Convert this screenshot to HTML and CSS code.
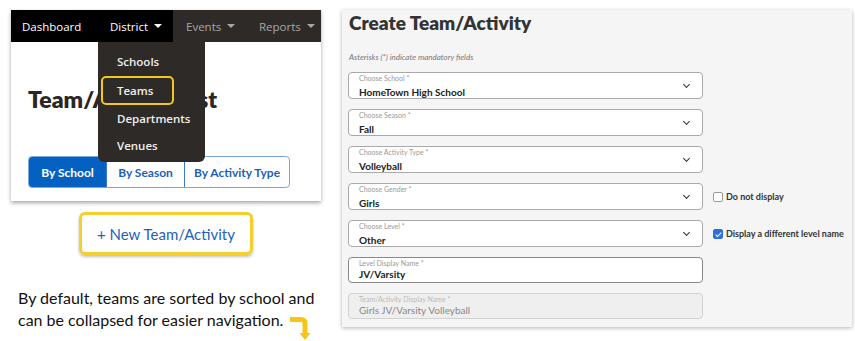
FILE: index.html
```html
<!DOCTYPE html>
<html lang="en">
<head>
  <meta charset="UTF-8">
  <meta name="viewport" content="width=device-width, initial-scale=1.0">
  <title>Teams</title>
  <link rel="stylesheet" href="styles.css">
</head>
<body>
<div class="page">
  <div class="left">
    <div class="card">
      <div class="nav">
        <div class="nav-item dash">Dashboard</div>
        <div class="nav-item district">District <span class="caret"></span></div>
        <div class="nav-item dim events">Events <span class="caret"></span></div>
        <div class="nav-item dim reports">Reports <span class="caret"></span></div>
      </div>
      <div class="menu">
        <div class="menu-item">Schools</div>
        <div class="menu-item active">Teams</div>
        <div class="menu-item">Departments</div>
        <div class="menu-item">Venues</div>
      </div>
      <h1 class="list-title">Team/Activity List</h1>
      <div class="tabs">
        <div class="tab on">By School</div>
        <div class="tab">By Season</div>
        <div class="tab wide">By Activity Type</div>
      </div>
    </div>

    <div class="new-btn">+ New Team/Activity</div>

    <div class="caption">
      <p>By default, teams are sorted by school and<br>can be collapsed for easier navigation.</p>
      <svg class="arrow" width="26" height="25" viewBox="0 0 26 25">
        <path d="M1 4.5 H12 Q16 4.5 16 8.5 V19" fill="none" stroke="#f5c518" stroke-width="5"/>
        <path d="M10.5 18 H21.5 L16 25 Z" fill="#f5c518"/>
      </svg>
    </div>
  </div>

  <div class="panel">
    <h2 class="panel-title">Create Team/Activity</h2>
    <p class="note">Asterisks (*) indicate mandatory fields</p>

    <div class="form">
      <div class="field">
        <span class="lbl">Choose School *</span>
        <span class="val">HomeTown High School</span>
        <span class="chev"></span>
      </div>
      <div></div>

      <div class="field">
        <span class="lbl">Choose Season *</span>
        <span class="val">Fall</span>
        <span class="chev"></span>
      </div>
      <div></div>

      <div class="field">
        <span class="lbl">Choose Activity Type *</span>
        <span class="val">Volleyball</span>
        <span class="chev"></span>
      </div>
      <div></div>

      <div class="field">
        <span class="lbl">Choose Gender *</span>
        <span class="val">Girls</span>
        <span class="chev"></span>
      </div>
      <label class="check"><span class="box"></span>Do not display</label>

      <div class="field">
        <span class="lbl">Choose Level *</span>
        <span class="val">Other</span>
        <span class="chev"></span>
      </div>
      <label class="check"><span class="box checked"></span>Display a different level name</label>

      <div class="field text">
        <span class="lbl">Level Display Name *</span>
        <span class="val">JV/Varsity</span>
      </div>
      <div></div>

      <div class="field text disabled">
        <span class="lbl">Team/Activity Display Name *</span>
        <span class="val">Girls JV/Varsity Volleyball</span>
      </div>
      <div></div>
    </div>
  </div>
</div>
</body>
</html>
```

FILE: styles.css
```css
body {
  margin: 0;
  background: #fff;
  font-family: Lato, "Open Sans", sans-serif;
  color: #222;
}
.page {
  display: flex;
  height: 341px;
  box-sizing: border-box;
  padding: 10px 0 0 11px;
}
.left {
  width: 310px;
}
.card {
  position: relative;
  height: 191px;
  background: #fff;
  box-shadow: 0 2px 4px rgba(0,0,0,.35);
}
.nav {
  display: flex;
  height: 32px;
  background: #2e2a27;
  font-family: "Open Sans", sans-serif;
  font-size: 11.5px;
}
.nav-item {
  display: flex;
  align-items: center;
  color: #fff;
  box-sizing: border-box;
}
.dash {
  width: 87px;
  padding-left: 11px;
  background: #000;
}
.district {
  width: 75px;
  padding-left: 12px;
  background: #000;
}
.events {
  width: 73px;
  padding-left: 13px;
}
.reports {
  padding-left: 13px;
}
.dim {
  color: #a9a6a3;
}
.caret {
  display: inline-block;
  margin-left: 6px;
  border-left: 4px solid transparent;
  border-right: 4px solid transparent;
  border-top: 4px solid currentColor;
}
.menu {
  position: absolute;
  left: 87px;
  top: 32px;
  width: 107px;
  height: 120px;
  box-sizing: border-box;
  padding-top: 6px;
  background: #2e2a27;
  border-radius: 0 0 6px 6px;
  z-index: 2;
}
.menu-item {
  height: 27.5px;
  margin: 0 3px;
  padding-left: 14px;
  display: flex;
  align-items: center;
  font-family: "Open Sans", sans-serif;
  font-size: 11.5px;
  font-weight: 600;
  color: #eee;
  border: 2px solid transparent;
  border-radius: 5px;
  box-sizing: border-box;
}
.menu-item.active {
  width: 73px;
  height: 29px;
  border: 2.5px solid #f2c81e;
}
.list-title {
  margin: 44px 0 0 17px;
  font-size: 23px;
  line-height: 26px;
  font-weight: 800;
  color: #2a2623;
}
.tabs {
  display: flex;
  margin: 44px 0 0 17px;
  width: 262px;
  height: 32px;
  border: 1px solid #7aa8dc;
  border-radius: 4px;
  overflow: hidden;
  box-sizing: border-box;
}
.tab {
  width: 77px;
  display: flex;
  align-items: center;
  justify-content: center;
  font-size: 12px;
  font-weight: 700;
  color: #1d5fb8;
  border-right: 1px solid #3a7bd0;
}
.tab.on {
  background: #0561c1;
  color: #fff;
}
.tab.wide {
  flex: 1;
  border-right: none;
}
.new-btn {
  width: 174px;
  height: 43px;
  margin: 11px auto 0;
  box-sizing: border-box;
  border: 3px solid #f5cf2e;
  border-radius: 6px;
  box-shadow: 0 2px 3px rgba(0,0,0,.25);
  display: flex;
  align-items: center;
  justify-content: center;
  font-size: 15px;
  color: #1f62b7;
}
.caption {
  position: relative;
  margin: 32px 0 0 7px;
}
.caption p {
  margin: 0;
  font-size: 16px;
  line-height: 22px;
  color: #111;
}
.arrow {
  position: absolute;
  left: 271px;
  top: 28px;
}
.panel {
  margin-left: 21px;
  width: 510px;
  height: 317px;
  background: #f5f5f5;
  box-shadow: 0 1px 4px rgba(0,0,0,.3);
  padding: 0 6px;
  box-sizing: border-box;
}
.panel-title {
  margin: 1px 0 0 1px;
  font-size: 19px;
  line-height: 24px;
  font-weight: 800;
  color: #333;
}
.note {
  margin: 17px 0 0 1px;
  font-size: 8px;
  font-style: italic;
  color: #777;
}
.form {
  display: grid;
  grid-template-columns: 355px auto;
  column-gap: 10px;
  row-gap: 10px;
  margin-top: 10px;
}
.field {
  position: relative;
  height: 27px;
  box-sizing: border-box;
  background: #fff;
  border: 1px solid #aaa;
  border-radius: 4px;
  padding: 1px 0 0 10px;
}
.lbl {
  display: block;
  font-size: 7px;
  line-height: 9px;
  color: #999;
}
.val {
  display: block;
  margin-top: 3px;
  font-size: 10px;
  line-height: 12px;
  font-weight: 700;
  color: #222;
}
.text .val {
  margin-top: 0;
}
.field.text {
  height: 26px;
  border-color: #888;
}
.field.disabled {
  height: 26px;
  background: #efefef;
  border-color: #d2d2d2;
}
.disabled .lbl {
  color: #bbb;
}
.disabled .val {
  font-weight: 400;
  color: #888;
}
.chev {
  position: absolute;
  right: 13px;
  top: 9px;
  width: 4px;
  height: 4px;
  border-right: 1.6px solid #333;
  border-bottom: 1.6px solid #333;
  transform: rotate(45deg);
}
.check {
  display: flex;
  align-items: center;
  white-space: nowrap;
  font-size: 9px;
  font-weight: 700;
  color: #333;
}
.box {
  width: 10px;
  height: 10px;
  margin-right: 3px;
  box-sizing: border-box;
  border: 1px solid #999;
  border-radius: 2px;
  background: #fff;
  position: relative;
}
.box.checked {
  background: #2f6fdc;
  border-color: #2f6fdc;
}
.box.checked::after {
  content: "";
  position: absolute;
  left: 3px;
  top: 1px;
  width: 2px;
  height: 5px;
  border-right: 1.3px solid #fff;
  border-bottom: 1.3px solid #fff;
  transform: rotate(45deg);
}
```
